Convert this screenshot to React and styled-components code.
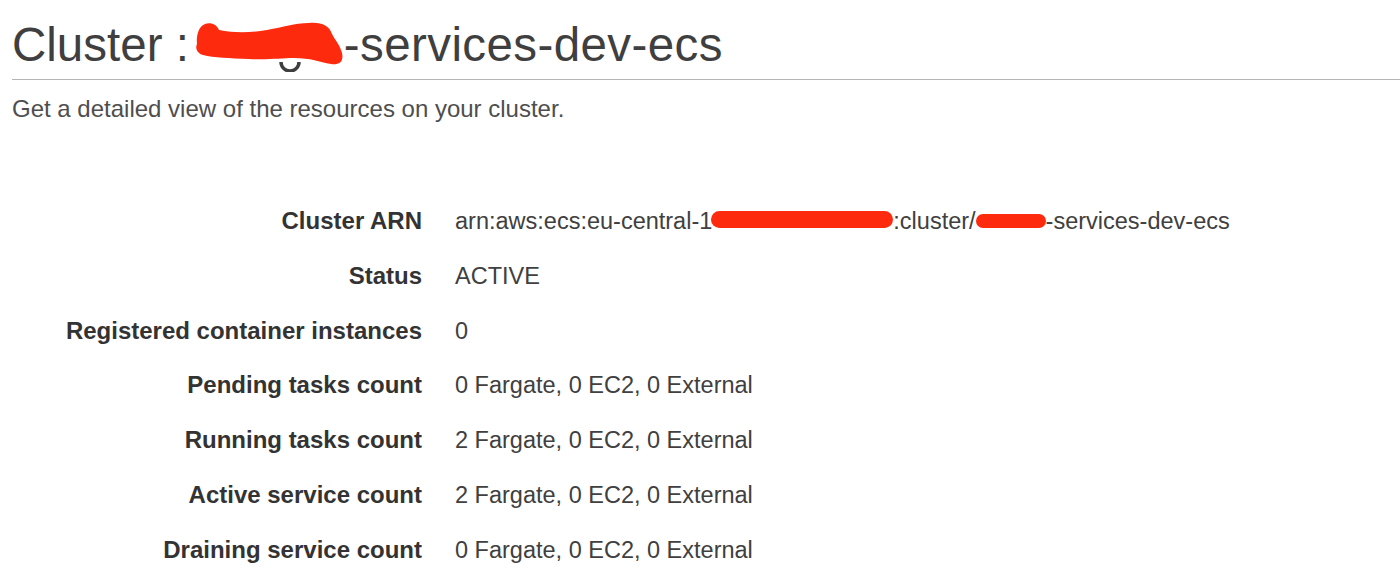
import React from "react";
import styled, { createGlobalStyle } from "styled-components";

const GlobalStyle = createGlobalStyle`
  html, body { margin: 0; padding: 0; background: #ffffff; }
  body { font-family: "Liberation Sans", Arial, Helvetica, sans-serif; }
`;

const Page = styled.div`
  padding-left: 12px;
  width: 1388px;
  height: 586px;
  overflow: hidden;
`;

const Header = styled.header`
  padding-top: 18px;
  padding-bottom: 7px;
  border-bottom: 1px solid #b5b5b5;
`;

const Title = styled.h1`
  margin: 0;
  font-size: 47.5px;
  line-height: 54px;
  font-weight: 400;
  color: #3f3f3f;
  white-space: nowrap;
`;

const TitleTail = styled.span`
  letter-spacing: 0.4px;
`;

const TitleBlob = styled.svg`
  display: inline-block;
  vertical-align: top;
  width: 155px;
  height: 54px;
`;

const Subtitle = styled.p`
  margin: 15px 0 0;
  font-size: 24px;
  line-height: 28px;
  color: #4e4e4e;
`;

const Details = styled.dl`
  margin: 71px 0 0;
  display: grid;
  grid-template-columns: 410px auto;
  column-gap: 33px;
  grid-auto-rows: 54.8px;
  font-size: 23.5px;
  line-height: 54.8px;
`;

const Label = styled.dt`
  margin: 0;
  text-align: right;
  font-size: 24px;
  font-weight: 700;
  color: #333333;
  white-space: nowrap;
`;

const Value = styled.dd`
  margin: 0;
  color: #404040;
  white-space: nowrap;
`;

const Redact = styled.span`
  display: inline-block;
  position: relative;
  z-index: 1;
  width: ${(p) => p.$w}px;
  height: ${(p) => p.$h}px;
  vertical-align: ${(p) => p.$lift}px;
  margin-left: ${(p) => p.$ml || 0}px;
  margin-right: ${(p) => p.$mr || 0}px;
  background: #fd2a0e;
  border-radius: ${(p) => p.$h / 2}px;
`;

const rows = [
  ["Status", "ACTIVE"],
  ["Registered container instances", "0"],
  ["Pending tasks count", "0 Fargate, 0 EC2, 0 External"],
  ["Running tasks count", "2 Fargate, 0 EC2, 0 External"],
  ["Active service count", "2 Fargate, 0 EC2, 0 External"],
  ["Draining service count", "0 Fargate, 0 EC2, 0 External"],
];

export default function App() {
  return (
    <>
      <GlobalStyle />
      <Page>
        <Header>
          <Title>
            Cluster :
            <TitleBlob viewBox="0 0 155 54" aria-hidden="true">
              <path
                d="M92 44 a9 9 0 0 0 18 0"
                fill="none"
                stroke="#3f3f3f"
                strokeWidth="3.5"
              />
              <path
                d="M8 26 C7 17 10 8 16 6 C22 4 28 7 30 12 C45 15 60 15 78 12 C95 9 105 5 120 5 C132 4 140 7 143 16 C146 22 151 27 153 35 C155 44 150 47 142 46 C130 44 122 40 105 40 C92 40 80 42 60 41 C40 40 25 40 14 37 C8 35 6 30 8 26 Z"
                fill="#fd2a0e"
              />
            </TitleBlob>
            <TitleTail>-services-dev-ecs</TitleTail>
          </Title>
        </Header>
        <Subtitle>Get a detailed view of the resources on your cluster.</Subtitle>
        <Details>
          <Label>Cluster ARN</Label>
          <Value>
            arn:aws:ecs:eu-central-1
            <Redact $w={182} $h={17} $lift={1} $ml={-1} $mr={0} />
            :cluster/
            <Redact $w={70} $h={14} $lift={1} />
            -services-dev-ecs
          </Value>
          {rows.map(([label, value]) => (
            <React.Fragment key={label}>
              <Label>{label}</Label>
              <Value>{value}</Value>
            </React.Fragment>
          ))}
        </Details>
      </Page>
    </>
  );
}
